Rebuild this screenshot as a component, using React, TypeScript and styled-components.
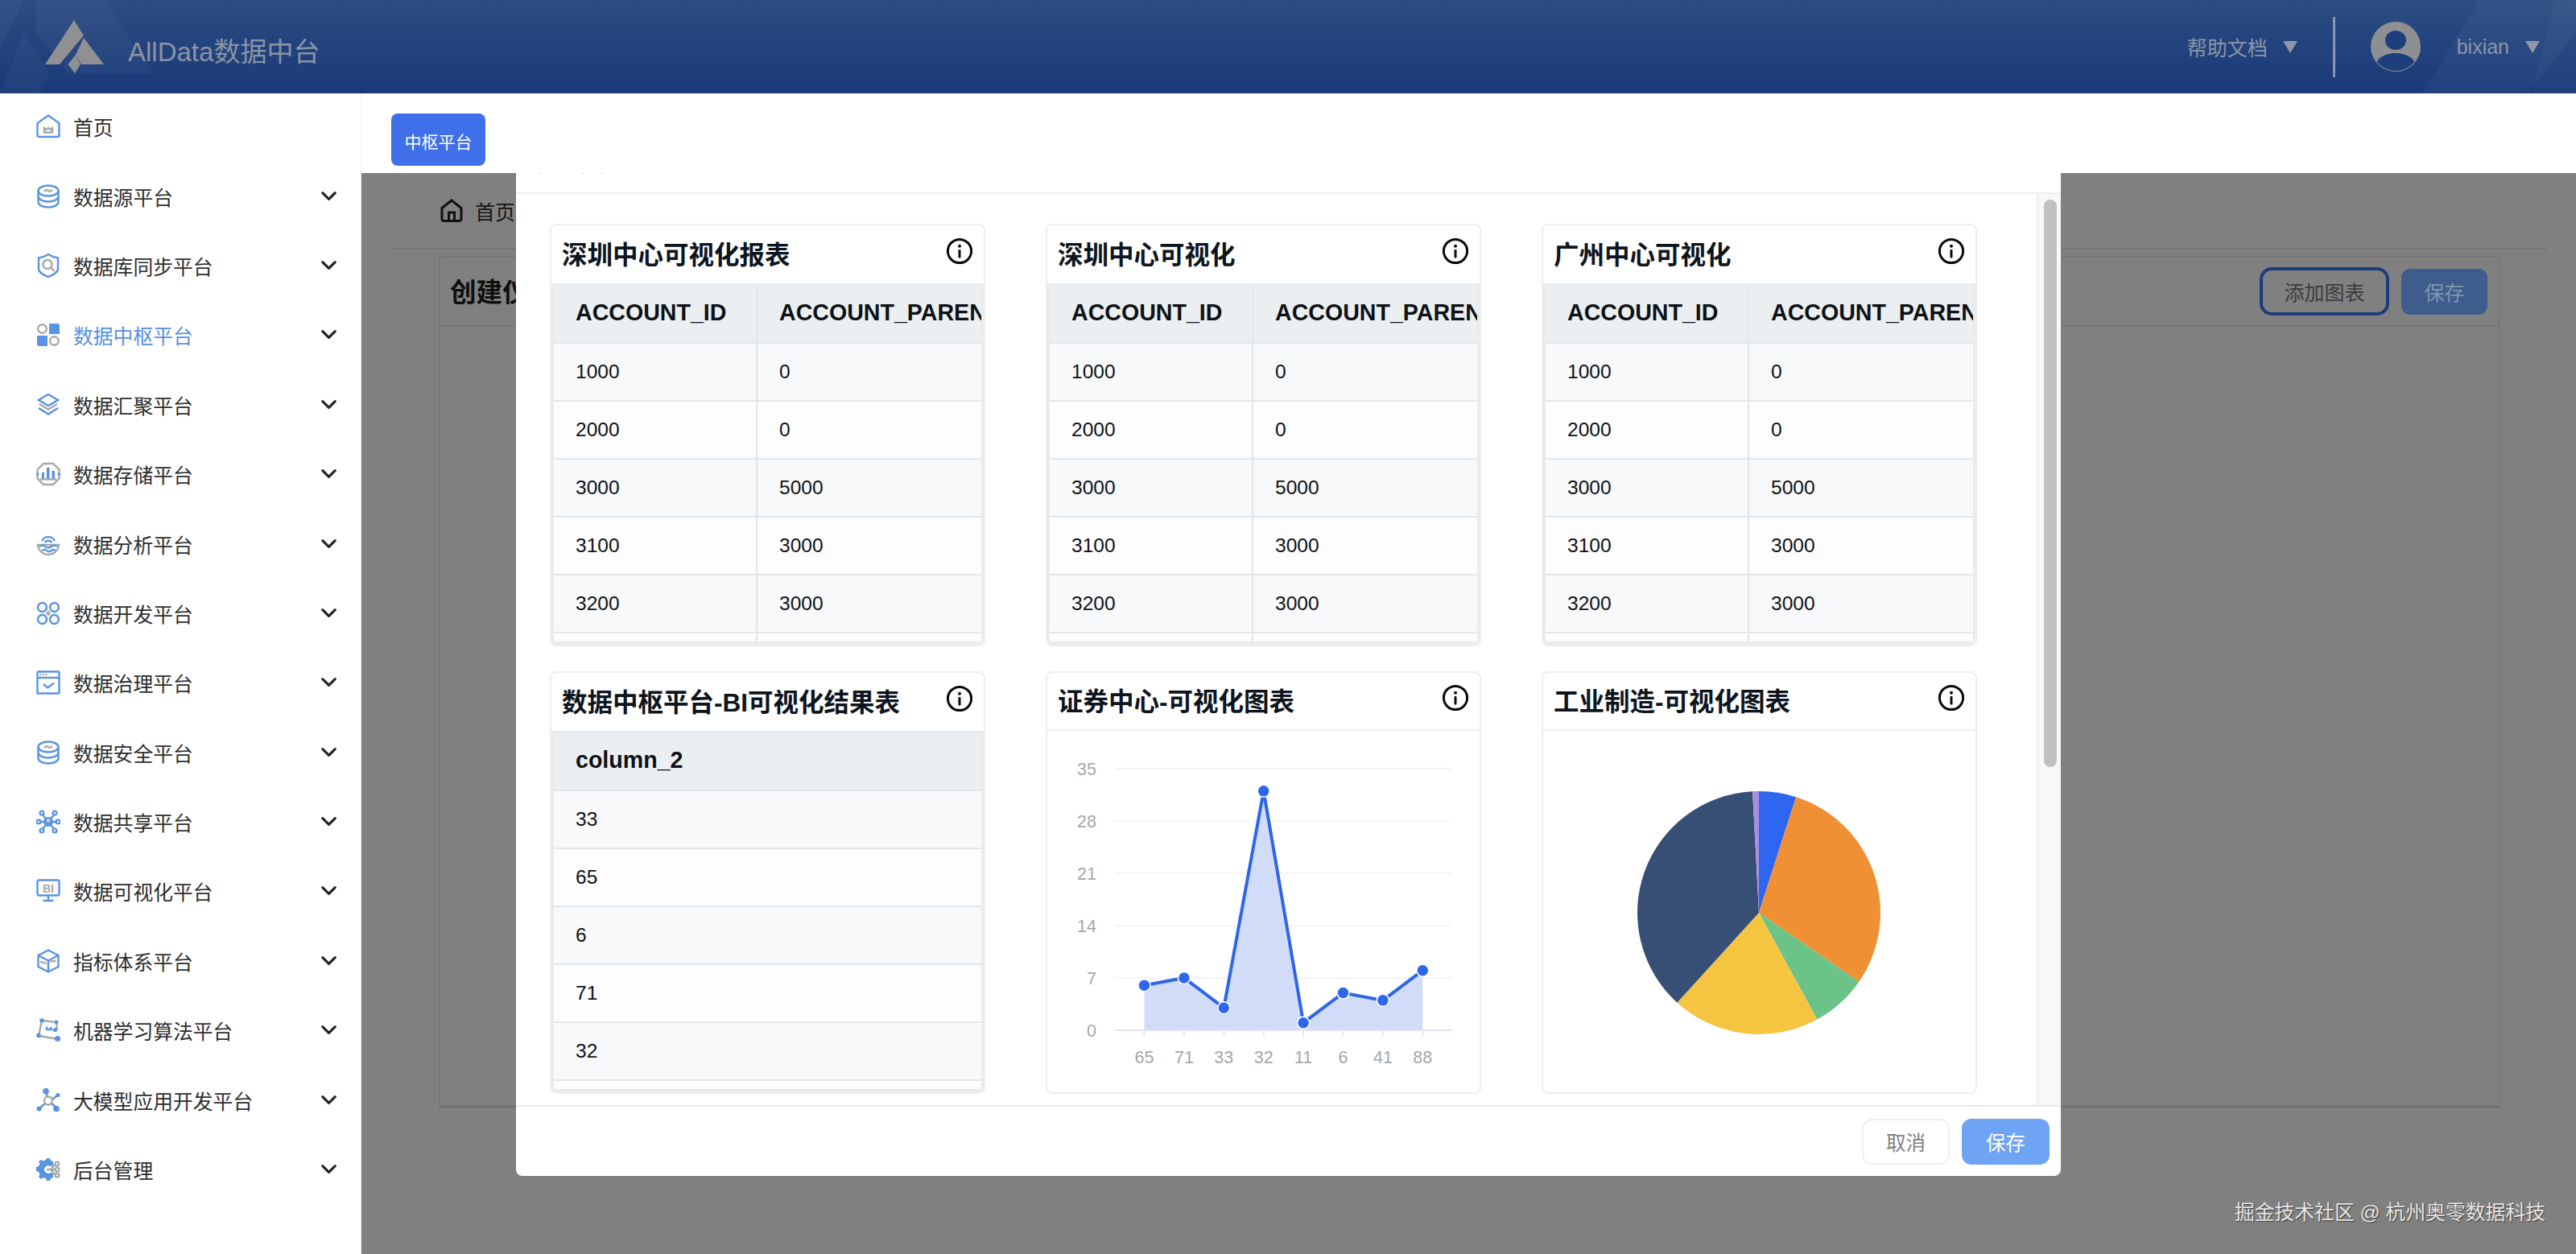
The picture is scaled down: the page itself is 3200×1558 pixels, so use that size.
import React from "react";
import styled, { createGlobalStyle } from "styled-components";
import { ChevronDown } from "lucide-react";

const FONT = `"Liberation Sans", "Noto Sans CJK SC", sans-serif`;
const B = "#5a93e3";
const G = "#a8a8a8";

const Global = createGlobalStyle`
  html, body { margin: 0; padding: 0; background: #808080; }
  * { box-sizing: border-box; }
`;

const Page = styled.div`
  position: relative;
  width: 3200px;
  height: 1558px;
  display: flex;
  flex-direction: column;
  overflow: hidden;
  font-family: ${FONT};
`;

/* ---------- header ---------- */
const Header = styled.header`
  position: relative;
  flex: 0 0 116px;
  display: flex;
  align-items: center;
  padding: 0 45px 0 56px;
  background: linear-gradient(180deg, #2c4c82 0%, #1a3979 100%);
  color: #8b96a8;
`;
const HeaderDecor = styled.svg`
  position: absolute;
  left: 0;
  top: 0;
  pointer-events: none;
`;
const LogoMark = styled.svg`
  position: relative;
  flex: none;
`;
const Brand = styled.div`
  position: relative;
  margin-left: 29px;
  margin-top: 7px;
  font-size: 33px;
  color: #8a94a4;
`;
const HeaderRight = styled.div`
  position: relative;
  margin-left: auto;
  display: flex;
  align-items: center;
`;
const HeaderText = styled.span`
  font-size: 25px;
`;
const Caret = styled.i`
  width: 0;
  height: 0;
  margin-left: ${(p: { $gap: number }) => p.$gap}px;
  border-left: 9px solid transparent;
  border-right: 9px solid transparent;
  border-top: 15px solid #8e97a6;
`;
const HeaderDivider = styled.div`
  width: 3px;
  height: 75px;
  margin: 0 44px;
  background: #8a98ae;
`;
const Avatar = styled.svg`
  flex: none;
  margin-right: 45px;
`;

/* ---------- shell ---------- */
const Shell = styled.div`
  flex: 1;
  display: flex;
  min-height: 0;
`;
const Sidebar = styled.nav`
  flex: 0 0 449px;
  background: #fff;
  border-right: 1px solid #eeeeee;
  padding-right: 24px;
`;
const NavList = styled.div`
  margin-top: -2px;
`;
const NavRow = styled.div<{ $active?: boolean }>`
  height: 86.4px;
  display: flex;
  align-items: center;
  padding-left: 45px;
  font-size: 24.8px;
  color: ${(p) => (p.$active ? "#5590e2" : "#2e2e2e")};
`;
const NavIcon = styled.svg`
  flex: none;
  margin-right: 16px;
  & path,
  & circle,
  & ellipse,
  & rect,
  & line {
    stroke-width: 2.4px;
  }
`;
const NavChevron = styled(ChevronDown)`
  margin-left: auto;
  margin-bottom: 1px;
  color: #222222;
`;

const Main = styled.main`
  position: relative;
  flex: 1;
  display: flex;
  flex-direction: column;
  min-width: 0;
`;
const Tabs = styled.div`
  position: relative;
  z-index: 2;
  flex: 0 0 99px;
  padding: 25px 0 0 37px;
  background: #fff;
`;
const TabButton = styled.div`
  width: 117px;
  height: 65px;
  display: flex;
  align-items: center;
  justify-content: center;
  border-radius: 8px;
  background: #3f6fe9;
  color: #fff;
  font-size: 21px;
  padding-top: 2px;
`;

/* ---------- dimmed page ---------- */
const Dimmed = styled.div`
  flex: 1;
  padding: 0 36px 0 35px;
  background: #808080;
`;
const Breadcrumb = styled.div`
  height: 95px;
  display: flex;
  align-items: center;
  padding: 0 0 0 63px;
  border-bottom: 2px solid #767676;
  font-size: 25px;
  color: #161616;
  margin-bottom: 8px;
`;
const CrumbIcon = styled.svg`
  margin-right: 15px;
`;
const PanelBack = styled.section`
  margin: 0 58px 0 61px;
  height: 1059px;
  border: 2px solid #777777;
  border-bottom: 4px solid #747474;
`;
const PanelHead = styled.div`
  height: 86px;
  display: flex;
  align-items: center;
  padding: 0 14px 0 12px;
  border-bottom: 2px solid #777777;
`;
const PanelTitle = styled.h2`
  margin: 0 0 3px;
  font-size: 32.6px;
  font-weight: 700;
  color: #0f0f0f;
`;
const OutlineBtn = styled.div`
  margin-left: auto;
  width: 161px;
  height: 60px;
  display: flex;
  align-items: center;
  justify-content: center;
  border: 4px solid #1d3c7a;
  border-radius: 15px;
  font-size: 25px;
  color: #3c3c3c;
`;
const FillBtn = styled.div`
  margin-left: 15px;
  width: 107px;
  height: 57px;
  display: flex;
  align-items: center;
  justify-content: center;
  border-radius: 11px;
  background: #3e5d8c;
  font-size: 25px;
  color: #8094b0;
`;
const Watermark = styled.div`
  position: absolute;
  right: 38px;
  bottom: 36px;
  font-size: 24.8px;
  color: #e6e6e6;
  text-shadow: 1px 1px 1px #3c3c3c;
  white-space: nowrap;
`;

/* ---------- modal ---------- */
const Modal = styled.div`
  position: absolute;
  z-index: 1;
  left: 192px;
  top: 44px;
  width: 1919px;
  height: 1301px;
  display: flex;
  flex-direction: column;
  background: #fff;
  border-radius: 8px;
  overflow: hidden;
`;
const ModalHead = styled.div`
  flex: 0 0 81px;
  padding: 25px 0 0 15px;
  border-bottom: 2px solid #eeeeee;
  font-size: 32px;
  line-height: 32px;
  color: #333;
`;
const ModalBody = styled.div`
  flex: 1;
  min-height: 0;
  display: flex;
`;
const Scroller = styled.div`
  flex: 1;
  min-width: 0;
  padding: 37px 0 0 42px;
  overflow: hidden;
`;
const CardGrid = styled.div`
  display: grid;
  grid-template-columns: repeat(3, 541px);
  grid-auto-rows: 525px;
  column-gap: 75px;
  row-gap: 31px;
`;
const Scrollbar = styled.div`
  flex: 0 0 29px;
  padding: 7px 5px 0 7px;
  background: #f8f8f8;
  border-left: 2px solid #eeeeee;
`;
const ScrollThumb = styled.div`
  width: 16px;
  height: 705px;
  border-radius: 8px;
  background: #c1c1c1;
`;
const ModalFoot = styled.div`
  flex: 0 0 88px;
  display: flex;
  justify-content: flex-end;
  gap: 15px;
  padding: 15px 14px 0 0;
  border-top: 2px solid #e9e9e9;
`;
const DialogBtn = styled.div<{ $primary?: boolean }>`
  width: 109px;
  height: 57px;
  display: flex;
  align-items: center;
  justify-content: center;
  border-radius: 12px;
  font-size: 24.5px;
  background: ${(p) => (p.$primary ? "#6fa3f4" : "#fff")};
  color: ${(p) => (p.$primary ? "#fff" : "#808080")};
  border: ${(p) => (p.$primary ? "none" : "2px solid #eeeeee")};
`;

/* ---------- cards ---------- */
const Card = styled.article`
  display: flex;
  flex-direction: column;
  width: 541px;
  height: 525px;
  background: #fff;
  border: 2px solid #eeeeee;
  border-radius: 8px;
  overflow: hidden;
`;
const CardHead = styled.div<{ $line?: boolean }>`
  flex: 0 0 72px;
  display: flex;
  align-items: center;
  justify-content: space-between;
  padding: 0 13px 6px 13px;
  border-bottom: ${(p) => (p.$line ? "2px solid #eeeeee" : "none")};
`;
const CardTitle = styled.h3`
  margin: 2px 0 0;
  font-size: 31.5px;
  font-weight: 700;
  color: #0d1520;
  white-space: nowrap;
`;
const TableWrap = styled.div`
  flex: 1;
  min-height: 0;
  overflow: hidden;
  border: 3px solid #e8ebee;
  border-bottom-width: 4px;
`;
const Row = styled.div<{ $kind: "head" | "odd" | "even" }>`
  display: flex;
  height: 72px;
  background: ${(p) =>
    p.$kind === "head" ? "#ebeff2" : p.$kind === "odd" ? "#f8f9fb" : "#fdfdfe"};
  border-bottom: 2px solid #e3e6e9;
`;
const Cell = styled.div<{ $w?: number; $head?: boolean }>`
  flex: ${(p) => (p.$w ? `0 0 ${p.$w}px` : "1")};
  display: flex;
  align-items: center;
  padding-left: 27px;
  padding-bottom: ${(p) => (p.$head ? "4px" : "0")};
  font-size: ${(p) => (p.$head ? "28.6px" : "24.5px")};
  font-weight: ${(p) => (p.$head ? 700 : 400)};
  color: #0e1216;
  white-space: nowrap;
  border-right: 2px solid #e3e6e9;
  &:last-child {
    border-right: none;
  }
`;
const ChartSvg = styled.svg`
  display: block;
`;
const AxisText = styled.text`
  font-family: ${FONT};
  font-size: 21.5px;
  fill: #a6a6a6;
`;
const InfoSvg = styled.svg`
  flex: none;
  margin-bottom: 3px;
`;

function InfoIcon() {
  return (
    <InfoSvg width="34" height="34" viewBox="0 0 34 34" fill="none">
      <circle cx="17" cy="17" r="14.6" stroke="#0a0a0a" strokeWidth="3" />
      <circle cx="17" cy="10.8" r="2" fill="#0a0a0a" />
      <rect x="15.5" y="15" width="3" height="10.5" rx="1" fill="#0a0a0a" />
    </InfoSvg>
  );
}

/* ---------- nav icons ---------- */
const icons: Record<string, React.ReactNode> = {
  home: (
    <>
      <path d="M15 1.5 28.5 11V26a2 2 0 0 1-2 2h-23a2 2 0 0 1-2-2V11Z" fill="none" stroke={B} />
      <path d="M10 17l2.5 1.5L15 17l2.5 1.5L20 17v5.5H10Z" fill="none" stroke={G} />
    </>
  ),
  db: (
    <>
      <ellipse cx="15" cy="8" rx="12.5" ry="6.5" fill="none" stroke={B} />
      <path d="M2.5 8v7c0 3.6 5.6 6.5 12.5 6.5S27.5 18.6 27.5 15V8" fill="none" stroke={B} />
      <path d="M2.5 15v7c0 3.6 5.6 6.5 12.5 6.5s12.5-2.9 12.5-6.5v-7" fill="none" stroke={B} />
      <path d="M10 9c2-2.2 3.5-2.2 5-1s3 1 5-1" fill="none" stroke={G} />
    </>
  ),
  shield: (
    <>
      <path d="M3 5.5C7 5 11 3.5 15 1c4 2.5 8 4 12 4.5V19c0 4-6 8-12 10C9 27 3 23 3 19Z" fill="none" stroke={B} />
      <circle cx="14" cy="13.5" r="5.5" fill="none" stroke={G} />
      <path d="M18 17.5l4 4" stroke={G} strokeLinecap="round" />
    </>
  ),
  grid: (
    <>
      <circle cx="7.5" cy="7.5" r="5.3" fill="none" stroke={G} />
      <path d="M16 1h10a3 3 0 0 1 3 3v10H16Z" fill={B} />
      <path d="M1 16h13v13H4a3 3 0 0 1-3-3Z" fill={B} />
      <circle cx="22.5" cy="22.5" r="5.3" fill="none" stroke={G} />
    </>
  ),
  layers: (
    <>
      <path d="M15 2 27 9 15 16 3 9Z" fill="none" stroke={B} />
      <path d="M4 14l11 6.5L26 14" fill="none" stroke={G} />
      <path d="M3 19l12 7.5L27 19" fill="none" stroke={B} />
    </>
  ),
  octa: (
    <>
      <path d="M9 2h12l7.5 7.5V20.5L21 28H9l-7.5-7.5V9.5Z" fill="none" stroke={G} />
      <path d="M7 13h3v8H7zM13 7h3.500v14H13zM19.500 11H23v10h-3.500z" fill={B} />
      <path d="M5 21.5h20" stroke={G} />
      <circle cx="1.8" cy="15" r="1.8" fill={B} />
      <circle cx="28.2" cy="15" r="1.8" fill={B} />
    </>
  ),
  bowl: (
    <>
      <path d="M7 11c3-6.5 13-6.5 16 0" fill="none" stroke={B} />
      <path d="M10.5 13c2-3 7-3 9 0" fill="none" stroke={B} />
      <path d="M2 16h26c-.5 7-6 12-13 12S2.5 23 2 16Z" fill="none" stroke={G} />
      <path d="M4 18c3-2 5-2 7 0s5 2 8 0 5-2 7 0M7 23c2.5-1.5 4.5-1.5 6 0s4 1.5 6 0 3-1.5 5 0" fill="none" stroke={B} />
    </>
  ),
  rings: (
    <>
      <circle cx="7.5" cy="7.5" r="5.5" fill="none" stroke={B} />
      <circle cx="22.5" cy="7.5" r="5.5" fill="none" stroke={B} />
      <circle cx="7.5" cy="22.5" r="5.5" fill="none" stroke={B} />
      <circle cx="22.5" cy="22.5" r="5.5" fill="none" stroke={B} />
      <path d="M15 12v6M12 15h6" stroke={G} />
    </>
  ),
  window: (
    <>
      <rect x="1.5" y="1.5" width="27" height="27" rx="1" fill="none" stroke={B} />
      <path d="M1.5 9h27" stroke={B} />
      <path d="M4.5 5h2M8 5h2M11.5 5h2" stroke={G} />
      <path d="M9 17l5.5 4.5L22 15.5" fill="none" stroke={B} />
    </>
  ),
  net: (
    <>
      <path d="M15 15 7 5M15 15l8-10M15 15 7 25M15 15l8 10M3 15h24" stroke={B} />
      <circle cx="15" cy="15" r="6" fill={B} />
      <circle cx="15" cy="13.5" r="2.2" fill="#d8d8d8" />
      {[[7, 4], [23, 4], [7, 26], [23, 26], [3, 15], [27, 15]].map(([x, y]) => (
        <circle key={`${x}${y}`} cx={x} cy={y} r="2.4" fill="#fff" stroke={B} />
      ))}
    </>
  ),
  bi: (
    <>
      <rect x="1.5" y="1.5" width="27" height="19" rx="2" fill="none" stroke={B} />
      <path d="M15 21v5M8.5 27h13" stroke={B} />
      <text x="15" y="16.5" textAnchor="middle" fontFamily={FONT} fontWeight="700" fontSize="14" fill={G}>BI</text>
    </>
  ),
  cube: (
    <>
      <path d="M15 1.5 27.5 8V22L15 28.5 2.5 22V8Z" fill="none" stroke={B} />
      <path d="M2.5 8 15 14.5 27.5 8M15 14.5V28.5" fill="none" stroke={B} />
      <path d="M5 15.5c3 1.5 6 2.5 8 2M17 15l5 .5 2.5-1.5" fill="none" stroke={G} />
    </>
  ),
  poly: (
    <>
      <path d="M7 3 25 5l1 8-1 2M7 3 3 22l24 4" fill="none" stroke={G} />
      <path d="M13 10.5v3.5h6l-1-3" fill="none" stroke={B} />
      {[[7, 3, 2.8], [25, 5, 2.4], [23.5, 14.5, 2.6], [3, 21.5, 2.8], [26.5, 25.5, 3.6]].map(([x, y, r]) => (
        <circle key={`${x}${y}`} cx={x} cy={y} r={r} fill={B} />
      ))}
    </>
  ),
  mol: (
    <>
      <path d="M12.5 6 14 11M20 14l6-5M11 19l-7 6M19 19l6 5" stroke={B} />
      <circle cx="15" cy="15.5" r="5" fill="none" stroke={G} />
      <circle cx="12" cy="3.8" r="3.8" fill={B} />
      <circle cx="27" cy="8.5" r="2.6" fill={B} />
      <circle cx="3.5" cy="25.5" r="3" fill={B} />
      <circle cx="25" cy="25.5" r="3.8" fill={B} />
    </>
  ),
  gear: (
    <>
      <path d="M13 1h4l1 3 3 1v5l-3 1c-3-2-8 0-8 4s5 6 8 4l3 1v5l-3 1-1 3h-4l-1-3-3-1-3 2-3-3 1.5-3-1.5-3-3-1v-5l3-1 1.5-3L3 5l3-2 3 1.5 3-1.5Z" fill={B} />
      <path d="M13 15h5l6-7M13 15h11M13 15h5l6 7" fill="none" stroke={G} />
      <circle cx="26" cy="8" r="2.4" fill="#fff" stroke={G} />
      <circle cx="26" cy="15" r="2.4" fill="#fff" stroke={G} />
      <circle cx="26" cy="22" r="2.4" fill="#fff" stroke={G} />
    </>
  ),
};

const navItems: { label: string; icon: string; active?: boolean; noArrow?: boolean }[] = [
  { label: "首页", icon: "home", noArrow: true },
  { label: "数据源平台", icon: "db" },
  { label: "数据库同步平台", icon: "shield" },
  { label: "数据中枢平台", icon: "grid", active: true },
  { label: "数据汇聚平台", icon: "layers" },
  { label: "数据存储平台", icon: "octa" },
  { label: "数据分析平台", icon: "bowl" },
  { label: "数据开发平台", icon: "rings" },
  { label: "数据治理平台", icon: "window" },
  { label: "数据安全平台", icon: "db" },
  { label: "数据共享平台", icon: "net" },
  { label: "数据可视化平台", icon: "bi" },
  { label: "指标体系平台", icon: "cube" },
  { label: "机器学习算法平台", icon: "poly" },
  { label: "大模型应用开发平台", icon: "mol" },
  { label: "后台管理", icon: "gear" },
];

/* ---------- tables ---------- */
const accountRows = [
  ["1000", "0"],
  ["2000", "0"],
  ["3000", "5000"],
  ["3100", "3000"],
  ["3200", "3000"],
  ["\u00a0", "\u00a0"],
];
const columnRows = [["33"], ["65"], ["6"], ["71"], ["32"], ["\u00a0"]];

function DataTable({ head, rows, widths }: { head: string[]; rows: string[][]; widths?: number[] }) {
  return (
    <TableWrap>
      <Row $kind="head">
        {head.map((h, i) => (
          <Cell key={h} $head $w={widths?.[i]}>{h}</Cell>
        ))}
      </Row>
      {rows.map((r, ri) => (
        <Row key={ri} $kind={ri % 2 === 0 ? "odd" : "even"}>
          {r.map((c, i) => (
            <Cell key={i} $w={widths?.[i]}>{c}</Cell>
          ))}
        </Row>
      ))}
    </TableWrap>
  );
}

function AccountCard({ title }: { title: string }) {
  return (
    <Card>
      <CardHead>
        <CardTitle>{title}</CardTitle>
        <InfoIcon />
      </CardHead>
      <DataTable head={["ACCOUNT_ID", "ACCOUNT_PARENT_ID"]} rows={accountRows} widths={[253, 340]} />
    </Card>
  );
}

/* ---------- charts ---------- */
const lineVals = [6, 7, 3, 32, 1, 5, 4, 8];
const lineCats = ["65", "71", "33", "32", "11", "6", "41", "88"];
const yVal = (v: number) => 1280 - (v * 65) / 7;
const xAt = (i: number) => 1421.5 + i * 49.4;

function LineChart() {
  const pts = lineVals.map((v, i) => `${xAt(i)},${yVal(v)}`).join(" ");
  return (
    <ChartSvg width="537" height="449" viewBox="1301 908 537 449">
      {[35, 28, 21, 14, 7].map((v) => (
        <line key={v} x1="1385" x2="1804" y1={yVal(v)} y2={yVal(v)} stroke="#f5f5f6" strokeWidth="2" />
      ))}
      {[35, 28, 21, 14, 7, 0].map((v) => (
        <AxisText key={v} x="1362" y={yVal(v) + 8} textAnchor="end">{v}</AxisText>
      ))}
      <polygon points={`${xAt(0)},1280 ${pts} ${xAt(7)},1280`} fill="#d0dcf8" />
      <line x1="1385" x2="1804" y1="1280" y2="1280" stroke="#e0e6f1" strokeWidth="2" />
      {lineCats.map((c, i) => (
        <g key={c}>
          <line x1={xAt(i)} x2={xAt(i)} y1="1280" y2="1287" stroke="#e0e6f1" strokeWidth="2" />
          <AxisText x={xAt(i)} y="1321" textAnchor="middle">{c}</AxisText>
        </g>
      ))}
      <polyline points={pts} fill="none" stroke="#2f66e6" strokeWidth="4" />
      {lineVals.map((v, i) => (
        <circle key={i} cx={xAt(i)} cy={yVal(v)} r="7.5" fill="#2f66ee" stroke="#fff" strokeWidth="1.5" />
      ))}
    </ChartSvg>
  );
}

const slices = [
  { from: 0, to: 17.8, color: "#2f66f0" },
  { from: 17.8, to: 124.6, color: "#f09035" },
  { from: 124.6, to: 151.4, color: "#6cc388" },
  { from: 151.4, to: 222.3, color: "#f5c542" },
  { from: 222.3, to: 357, color: "#374f75" },
  { from: 357, to: 360, color: "#a78fe0" },
];
function arc(from: number, to: number) {
  const cx = 268;
  const cy = 226;
  const r = 151;
  const p = (a: number) => {
    const t = (a * Math.PI) / 180;
    return `${cx + r * Math.sin(t)} ${cy - r * Math.cos(t)}`;
  };
  return `M${cx} ${cy}L${p(from)}A${r} ${r} 0 ${to - from > 180 ? 1 : 0} 1 ${p(to)}Z`;
}
function PieChart() {
  return (
    <ChartSvg width="537" height="449" viewBox="0 0 537 449">
      {slices.map((s) => (
        <path key={s.color} d={arc(s.from, s.to)} fill={s.color} />
      ))}
    </ChartSvg>
  );
}

export default function App() {
  return (
    <Page>
      <Global />
      <Header>
        <HeaderDecor width="3200" height="116" viewBox="0 0 3200 116">
          <path d="M45 0h85l60 92H85L45 40Z" fill="#fff" opacity=".035" />
          <path d="M0 116 30 40 62 92 50 116Z" fill="#fff" opacity=".035" />
          <path d="M0 0h30L0 60Z" fill="#fff" opacity=".035" />
          <path d="M3080 0h120v40L3140 116h-131Z" fill="#fff" opacity=".04" />
          <path d="M3175 0h25v116h-55Z" fill="#fff" opacity=".03" />
        </HeaderDecor>
        <LogoMark width="74" height="66" viewBox="56 17 74 66" fill="#8f9092">
          <path d="M92 17 104 36 74 72H56Z" />
          <path d="M104 39 129 72H101L94 60Z" />
          <path d="M94 60 100 72 93 83 84.5 72Z" />
        </LogoMark>
        <Brand>AllData数据中台</Brand>
        <HeaderRight>
          <HeaderText>帮助文档</HeaderText>
          <Caret $gap={19} />
          <HeaderDivider />
          <Avatar width="62" height="62" viewBox="-31 -31 62 62">
            <defs>
              <clipPath id="av">
                <circle r="30" />
              </clipPath>
            </defs>
            <circle r="31" fill="#8d8f92" />
            <ellipse cy="-8" rx="13" ry="12" fill="#1f3f7c" />
            <ellipse cy="24" rx="25" ry="16" fill="#1f3f7c" clipPath="url(#av)" />
          </Avatar>
          <HeaderText>bixian</HeaderText>
          <Caret $gap={20} />
        </HeaderRight>
      </Header>
      <Shell>
        <Sidebar>
          <NavList>
            {navItems.map((n) => (
              <NavRow key={n.label} $active={n.active}>
                <NavIcon width="30" height="30" viewBox="0 0 30 30">{icons[n.icon]}</NavIcon>
                {n.label}
                {!n.noArrow && <NavChevron size={31} strokeWidth={2.4} />}
              </NavRow>
            ))}
          </NavList>
        </Sidebar>
        <Main>
          <Tabs>
            <TabButton>中枢平台</TabButton>
          </Tabs>
          <Dimmed>
            <Breadcrumb>
              <CrumbIcon width="28" height="30" viewBox="0 0 28 30" fill="none" stroke="#111" strokeWidth="3">
                <path d="M14 2 26 11.5V25a2.5 2.5 0 0 1-2.5 2.5h-19A2.5 2.5 0 0 1 2 25V11.5Z" />
                <path d="M10.5 27.5V17h7v10.5" />
              </CrumbIcon>
              首页
            </Breadcrumb>
            <PanelBack>
              <PanelHead>
                <PanelTitle>创建仪表盘</PanelTitle>
                <OutlineBtn>添加图表</OutlineBtn>
                <FillBtn>保存</FillBtn>
              </PanelHead>
            </PanelBack>
          </Dimmed>
          <Modal>
            <ModalHead>添加图表</ModalHead>
            <ModalBody>
              <Scroller>
                <CardGrid>
                  <AccountCard title="深圳中心可视化报表" />
                  <AccountCard title="深圳中心可视化" />
                  <AccountCard title="广州中心可视化" />
                  <Card>
                    <CardHead>
                      <CardTitle>数据中枢平台-BI可视化结果表</CardTitle>
                      <InfoIcon />
                    </CardHead>
                    <DataTable head={["column_2"]} rows={columnRows} />
                  </Card>
                  <Card>
                    <CardHead $line>
                      <CardTitle>证券中心-可视化图表</CardTitle>
                      <InfoIcon />
                    </CardHead>
                    <LineChart />
                  </Card>
                  <Card>
                    <CardHead $line>
                      <CardTitle>工业制造-可视化图表</CardTitle>
                      <InfoIcon />
                    </CardHead>
                    <PieChart />
                  </Card>
                </CardGrid>
              </Scroller>
              <Scrollbar>
                <ScrollThumb />
              </Scrollbar>
            </ModalBody>
            <ModalFoot>
              <DialogBtn>取消</DialogBtn>
              <DialogBtn $primary>保存</DialogBtn>
            </ModalFoot>
          </Modal>
          <Watermark>掘金技术社区 @ 杭州奥零数据科技</Watermark>
        </Main>
      </Shell>
    </Page>
  );
}
